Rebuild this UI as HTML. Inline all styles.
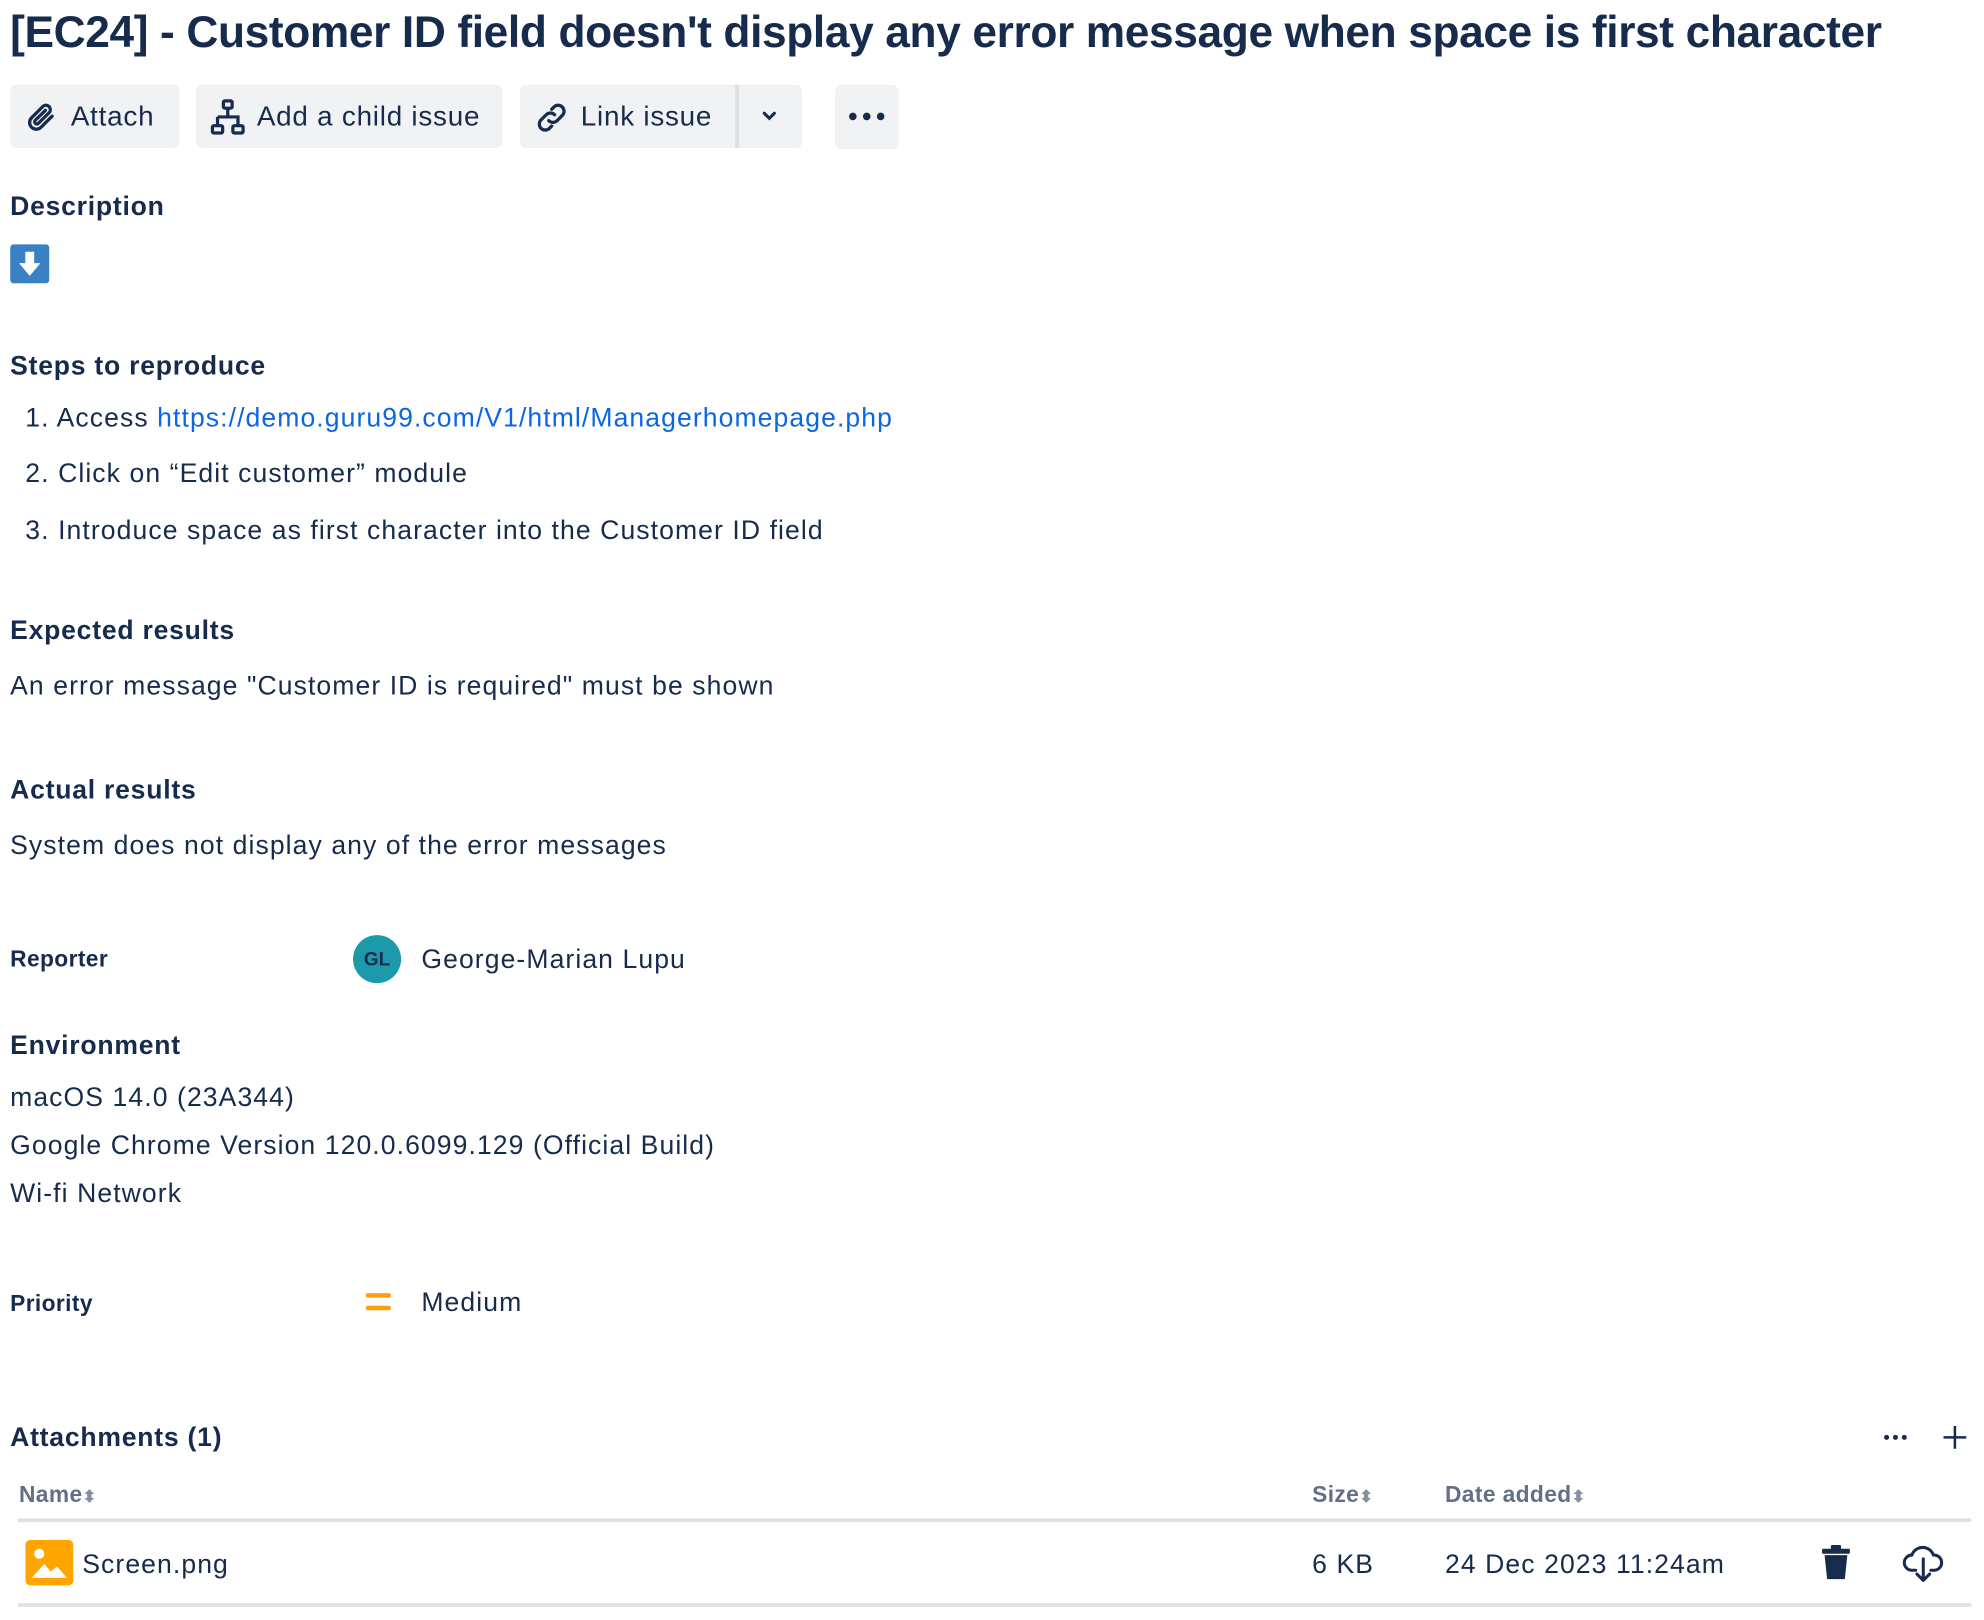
<!DOCTYPE html>
<html><head><meta charset="utf-8">
<style>
html,body{margin:0;padding:0;background:#fff;width:1984px;height:1620px;overflow:hidden}
#w{position:absolute;left:0;top:0;width:1568px;height:1280px;transform:scale(1.26531);transform-origin:0 0;font-family:"Liberation Sans",Arial,sans-serif;color:#172b4d}
.a{position:absolute;white-space:nowrap;line-height:1}
.h{font-weight:bold;font-size:21px;letter-spacing:0.6px}
.t{font-size:21px;letter-spacing:0.85px}
.s{font-weight:bold;font-size:18px;letter-spacing:0.3px}
.btn{position:absolute;top:67px;height:50px;background:#f1f2f4;border-radius:5px}
.btn span{position:absolute;top:14px;font-size:22px;line-height:1;white-space:nowrap;letter-spacing:0.6px}
.g{color:#626f86;font-size:18px;font-weight:bold;letter-spacing:0.3px}
.line{position:absolute;left:14px;width:1544px;height:3px;background:#dfe1e6}
</style></head><body><div id="w">
<div class="a" style="left:8px;top:8px;font-size:35px;font-weight:bold;letter-spacing:-0.3px">[EC24] - Customer ID field doesn't display any error message when space is first character</div>

<div class="btn" style="left:8px;width:134px">
<svg style="position:absolute;left:11px;top:12px" width="28" height="28" viewBox="0 0 24 24" fill="none" stroke="#172b4d" stroke-width="2.2" stroke-linecap="round"><path d="M19 11l-7.5 7.5a4.5 4.5 0 01-6.4-6.4L13 4.2a3 3 0 014.2 4.2l-7.6 7.6a1.5 1.5 0 01-2.1-2.1L14.5 7"/></svg>
<span style="left:48px">Attach</span></div>
<div class="btn" style="left:155px;width:242px">
<svg style="position:absolute;left:11px;top:11px" width="28" height="30" viewBox="0 0 24 26" fill="none" stroke="#172b4d" stroke-width="2.2"><rect x="9" y="1.5" width="6" height="5" rx="1"/><path d="M12 6.5v6M5 12.5h14v6M5 12.5v6"/><rect x="1.5" y="18.5" width="7" height="5" rx="1"/><rect x="15.5" y="18.5" width="7" height="5" rx="1"/></svg>
<span style="left:48px">Add a child issue</span></div>
<div class="btn" style="left:411px;width:223px">
<svg style="position:absolute;left:10px;top:12px" width="30" height="28" viewBox="0 0 24 24" fill="none" stroke="#172b4d" stroke-width="2.2" stroke-linecap="round"><path d="M10 14a4 4 0 005.7 0l3.5-3.5a4 4 0 00-5.7-5.7L12 6.3"/><path d="M14 10a4 4 0 00-5.7 0l-3.5 3.5a4 4 0 005.7 5.7l1.5-1.5"/></svg>
<span style="left:48px">Link issue</span>
<div style="position:absolute;left:170px;top:0;width:3px;height:50px;background:#dcdfe4"></div>
<svg style="position:absolute;left:190px;top:19px" width="14" height="12" viewBox="0 0 14 12" fill="none" stroke="#172b4d" stroke-width="2.4" stroke-linecap="round"><path d="M3 3.5l4 4 4-4"/></svg></div>
<div class="btn" style="left:660px;width:50px;height:51px">
<svg style="position:absolute;left:10px;top:21px" width="30" height="8"><circle cx="4" cy="4" r="3" fill="#172b4d"/><circle cx="15" cy="4" r="3" fill="#172b4d"/><circle cx="26" cy="4" r="3" fill="#172b4d"/></svg></div>

<div class="a h" style="left:8px;top:153px">Description</div>
<svg style="position:absolute;left:8px;top:193px" width="31" height="31" viewBox="0 0 31 31"><rect width="31" height="31" rx="3" fill="#3a81c3"/><path d="M12 6h7v9h5l-8.5 10L7 15h5z" fill="#fff"/></svg>

<div class="a h" style="left:8px;top:279px">Steps to reproduce</div>
<div class="a t" style="left:20px;top:320px">1. Access <span style="color:#0c66e4">https://demo.guru99.com/V1/html/Managerhomepage.php</span></div>
<div class="a t" style="left:20px;top:364px">2. Click on “Edit customer” module</div>
<div class="a t" style="left:20px;top:409px">3. Introduce space as first character into the Customer ID field</div>

<div class="a h" style="left:8px;top:488px">Expected results</div>
<div class="a t" style="left:8px;top:532px">An error message "Customer ID is required" must be shown</div>
<div class="a h" style="left:8px;top:614px">Actual results</div>
<div class="a t" style="left:8px;top:658px">System does not display any of the error messages</div>

<div class="a s" style="left:8px;top:749px">Reporter</div>
<div style="position:absolute;left:279px;top:739px;width:38px;height:38px;border-radius:50%;background:#1d9aaa"></div>
<div class="a" style="left:279px;top:751px;width:38px;text-align:center;font-size:15px;font-weight:bold;color:#172b4d">GL</div>
<div class="a t" style="left:333px;top:748px">George-Marian Lupu</div>

<div class="a h" style="left:8px;top:816px">Environment</div>
<div class="a t" style="left:8px;top:857px">macOS 14.0 (23A344)</div>
<div class="a t" style="left:8px;top:895px">Google Chrome Version 120.0.6099.129 (Official Build)</div>
<div class="a t" style="left:8px;top:933px">Wi-fi Network</div>

<div class="a s" style="left:8px;top:1021px">Priority</div>
<svg style="position:absolute;left:288px;top:1021px" width="22" height="16"><rect x="1" y="1" width="20" height="3.5" rx="1.7" fill="#ff9e0f"/><rect x="1" y="11" width="20" height="3.5" rx="1.7" fill="#ff9e0f"/></svg>
<div class="a t" style="left:333px;top:1019px">Medium</div>

<div class="a h" style="left:8px;top:1126px">Attachments (1)</div>
<svg style="position:absolute;left:1488px;top:1133px" width="22" height="6"><circle cx="3" cy="3" r="2" fill="#172b4d"/><circle cx="10" cy="3" r="2" fill="#172b4d"/><circle cx="17" cy="3" r="2" fill="#172b4d"/></svg>
<svg style="position:absolute;left:1535px;top:1126px" width="20" height="20"><path d="M10 1v18M1 10h18" stroke="#172b4d" stroke-width="2"/></svg>

<div class="a g" style="left:15px;top:1172px">Name<span style="font-size:13px;color:#8590a2">⬍</span></div>
<div class="a g" style="left:1037px;top:1172px">Size<span style="font-size:13px;color:#8590a2">⬍</span></div>
<div class="a g" style="left:1142px;top:1172px">Date added<span style="font-size:13px;color:#8590a2">⬍</span></div>
<div class="line" style="top:1200px"></div>
<svg style="position:absolute;left:20px;top:1217px" width="38" height="36" viewBox="0 0 38 36"><rect width="38" height="36" rx="4" fill="#ffa500"/><circle cx="11" cy="11" r="4" fill="#fff"/><path d="M5 30l10-11 5 6 5-4 8 9z" fill="#fff"/></svg>
<div class="a t" style="left:65px;top:1226px">Screen.png</div>
<div class="a t" style="left:1037px;top:1226px">6 KB</div>
<div class="a t" style="left:1142px;top:1226px">24 Dec 2023 11:24am</div>
<svg style="position:absolute;left:1438px;top:1221px" width="26" height="28" viewBox="0 0 26 28"><rect x="2" y="3" width="22" height="4" rx="1" fill="#172b4d"/><rect x="9" y="0" width="8" height="4" rx="1" fill="#172b4d"/><path d="M4 8h18l-2 19H6z" fill="#172b4d"/></svg>
<svg style="position:absolute;left:1503px;top:1219px" width="34" height="32" viewBox="0 0 34 32" fill="none" stroke="#172b4d" stroke-width="2.4" stroke-linecap="round" stroke-linejoin="round"><path d="M11 22H8a6 6 0 010-12 9 9 0 0117 0 6 6 0 011 12h-3"/><path d="M17 13v17M12 25l5 5 5-5"/></svg>
<div class="line" style="top:1267px"></div>
</div></body></html>
